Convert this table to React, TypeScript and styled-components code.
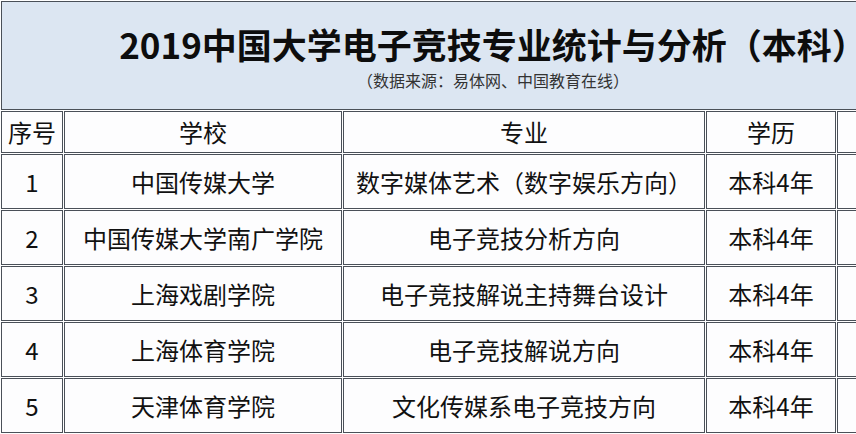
import React from 'react'
import styled, { createGlobalStyle } from 'styled-components'

const GlobalStyle = createGlobalStyle`
  html, body {
    margin: 0;
    padding: 0;
    background: #ffffff;
    overflow: hidden;
  }
  body {
    font-family: "Noto Sans CJK SC", "Noto Sans", sans-serif;
    color: #111;
    text-spacing-trim: space-all;
  }
`

const Table = styled.table`
  border-collapse: separate;
  border-spacing: 1px;
  table-layout: fixed;
  width: 986px;
  background: #ffffff;
`

const TitleCell = styled.th`
  height: 109px;
  box-sizing: border-box;
  padding: 0;
  border: 1px solid #4a5058;
  background: #dce6f2;
  text-align: center;
  vertical-align: middle;
`

const Title = styled.div`
  font-size: 35px;
  font-weight: 700;
  line-height: 48px;
  color: #0d0d0d;
  white-space: nowrap;
`

const Source = styled.div`
  font-size: 16px;
  font-weight: 400;
  line-height: 24px;
  color: #333;
`

const Cell = styled.td<{ $head?: boolean }>`
  height: ${(p) => (p.$head ? 42 : 55)}px;
  box-sizing: border-box;
  padding: 0;
  border: 1px solid #4a5058;
  background: #fdfdfe;
  text-align: center;
  vertical-align: middle;
  font-size: 24px;
  line-height: 1;
  white-space: nowrap;
  overflow: hidden;
`

const widths = [62, 278, 362, 130, 148]

const rows = [
  ['1', '中国传媒大学', '数字媒体艺术（数字娱乐方向）', '本科4年', ''],
  ['2', '中国传媒大学南广学院', '电子竞技分析方向', '本科4年', ''],
  ['3', '上海戏剧学院', '电子竞技解说主持舞台设计', '本科4年', ''],
  ['4', '上海体育学院', '电子竞技解说方向', '本科4年', ''],
  ['5', '天津体育学院', '文化传媒系电子竞技方向', '本科4年', ''],
]

export default function App() {
  return (
    <>
      <GlobalStyle />
      <Table>
        <colgroup>
          {widths.map((w, i) => (
            <col key={i} style={{ width: w }} />
          ))}
        </colgroup>
        <tbody>
          <tr>
            <TitleCell colSpan={5}>
              <Title>2019中国大学电子竞技专业统计与分析（本科）</Title>
              <Source>（数据来源：易体网、中国教育在线）</Source>
            </TitleCell>
          </tr>
          <tr>
            <Cell $head>序号</Cell>
            <Cell $head>学校</Cell>
            <Cell $head>专业</Cell>
            <Cell $head>学历</Cell>
            <Cell $head></Cell>
          </tr>
          {rows.map((r) => (
            <tr key={r[0]}>
              {r.map((c, i) => (
                <Cell key={i}>{c}</Cell>
              ))}
            </tr>
          ))}
        </tbody>
      </Table>
    </>
  )
}
